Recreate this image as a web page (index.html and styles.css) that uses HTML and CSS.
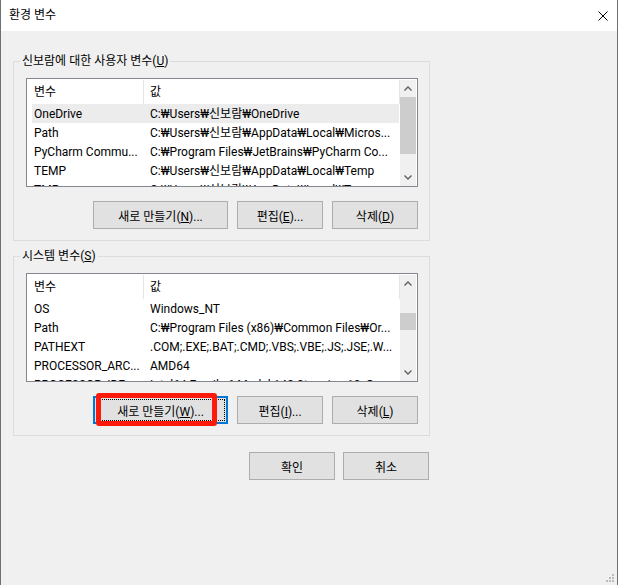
FILE: index.html
```html
<!DOCTYPE html>
<html lang="ko">
<head>
  <meta charset="UTF-8">
  <title>환경 변수</title>
  <link rel="stylesheet" href="styles.css">
</head>
<body>
  <div class="window">
    <div class="titlebar">
      <span class="title">환경 변수</span>
      <svg class="close" width="10" height="10" viewBox="0 0 10 10">
        <path d="M0.5 0.5L9.5 9.5M9.5 0.5L0.5 9.5" stroke="#000" stroke-width="1" fill="none"/>
      </svg>
    </div>

    <div class="content">
      <fieldset class="group">
        <legend>신보람에 대한 사용자 변수(<u>U</u>)</legend>
        <div class="listview">
          <div class="list">
            <div class="list-header"><span class="col-name">변수</span><span class="col-value">값</span></div>
            <div class="row selected"><span class="col-name">OneDrive</span><span class="col-value">C:₩Users₩신보람₩OneDrive</span></div>
            <div class="row"><span class="col-name">Path</span><span class="col-value">C:₩Users₩신보람₩AppData₩Local₩Micros...</span></div>
            <div class="row"><span class="col-name">PyCharm Commu...</span><span class="col-value">C:₩Program Files₩JetBrains₩PyCharm Co...</span></div>
            <div class="row"><span class="col-name">TEMP</span><span class="col-value">C:₩Users₩신보람₩AppData₩Local₩Temp</span></div>
            <div class="row"><span class="col-name">TMP</span><span class="col-value">C:₩Users₩신보람₩AppData₩Local₩Temp</span></div>
          </div>
          <div class="scrollbar">
            <div class="arrow"><svg width="8" height="5" viewBox="0 0 8 5"><path d="M0.5 4.5L4 1L7.5 4.5" stroke="#606060" stroke-width="1.4" fill="none"/></svg></div>
            <div class="track"><div class="thumb thumb-user"></div></div>
            <div class="arrow"><svg width="8" height="5" viewBox="0 0 8 5"><path d="M0.5 0.5L4 4L7.5 0.5" stroke="#606060" stroke-width="1.4" fill="none"/></svg></div>
          </div>
        </div>
        <div class="buttons">
          <button class="btn btn-wide">새로 만들기(<u>N</u>)...</button>
          <button class="btn">편집(<u>E</u>)...</button>
          <button class="btn">삭제(<u>D</u>)</button>
        </div>
      </fieldset>

      <fieldset class="group">
        <legend>시스템 변수(<u>S</u>)</legend>
        <div class="listview">
          <div class="list">
            <div class="list-header"><span class="col-name">변수</span><span class="col-value">값</span></div>
            <div class="row"><span class="col-name">OS</span><span class="col-value">Windows_NT</span></div>
            <div class="row"><span class="col-name">Path</span><span class="col-value">C:₩Program Files (x86)₩Common Files₩Or...</span></div>
            <div class="row"><span class="col-name">PATHEXT</span><span class="col-value">.COM;.EXE;.BAT;.CMD;.VBS;.VBE;.JS;.JSE;.W...</span></div>
            <div class="row"><span class="col-name">PROCESSOR_ARC...</span><span class="col-value">AMD64</span></div>
            <div class="row"><span class="col-name">PROCESSOR_IDE...</span><span class="col-value">Intel64 Family 6 Model 142 Stepping 10, Ge...</span></div>
          </div>
          <div class="scrollbar">
            <div class="arrow"><svg width="8" height="5" viewBox="0 0 8 5"><path d="M0.5 4.5L4 1L7.5 4.5" stroke="#606060" stroke-width="1.4" fill="none"/></svg></div>
            <div class="track"><div class="thumb thumb-system"></div></div>
            <div class="arrow"><svg width="8" height="5" viewBox="0 0 8 5"><path d="M0.5 0.5L4 4L7.5 0.5" stroke="#606060" stroke-width="1.4" fill="none"/></svg></div>
          </div>
        </div>
        <div class="buttons">
          <button class="btn btn-wide btn-default">새로 만들기(<u>W</u>)...<span class="annotation"></span></button>
          <button class="btn">편집(<u>I</u>)...</button>
          <button class="btn">삭제(<u>L</u>)</button>
        </div>
      </fieldset>

      <div class="dialog-buttons">
        <button class="btn">확인</button>
        <button class="btn">취소</button>
      </div>
    </div>

    <svg class="grip" width="8" height="8" viewBox="0 0 8 8">
      <rect x="6" y="0" width="2" height="2" fill="#bcbcbc"/>
      <rect x="3" y="3" width="2" height="2" fill="#bcbcbc"/>
      <rect x="6" y="3" width="2" height="2" fill="#bcbcbc"/>
      <rect x="0" y="6" width="2" height="2" fill="#bcbcbc"/>
      <rect x="3" y="6" width="2" height="2" fill="#bcbcbc"/>
      <rect x="6" y="6" width="2" height="2" fill="#bcbcbc"/>
    </svg>
  </div>
</body>
</html>
```

FILE: styles.css
```css
* {
  box-sizing: border-box;
}
body {
  margin: 0;
  font-family: Roboto, "Noto Sans CJK KR", sans-serif;
  font-size: 12px;
  color: #000;
  background-color: #f0f0f0;
}
.window {
  position: relative;
  width: 618px;
  height: 585px;
  border-left: 1px solid #707070;
  border-right: 1px solid #707070;
  background-color: #f0f0f0;
  overflow: hidden;
}
.titlebar {
  display: flex;
  align-items: center;
  justify-content: space-between;
  height: 31px;
  padding: 0 9px 0 8px;
  background-color: #fff;
}
.title {
  line-height: 31px;
}
.close {
  display: block;
}
.content {
  padding: 22px 12px 0;
}
.group {
  width: 417px;
  min-width: 0;
  margin: 0;
  padding: 8px 11px 11px 12px;
  border: 1px solid #dcdcdc;
}
.group + .group {
  margin-top: 7px;
}
.group legend {
  height: 17px;
  line-height: 17px;
  padding: 0 2px;
  margin-left: -6px;
}
.listview {
  display: flex;
  height: 109px;
  border: 1px solid #828790;
  background-color: #fff;
}
.list {
  flex: 1;
  overflow: hidden;
}
.list-header {
  display: flex;
  height: 25px;
}
.list-header span {
  height: 24px;
  margin-top: 1px;
  line-height: 24px;
  border-right: 1px solid #e5e5e5;
}
.list-header .col-name {
  width: 117px;
  padding-left: 7px;
}
.list-header .col-value {
  flex: 1;
  padding-left: 6px;
}
.row {
  display: flex;
  height: 19px;
  margin: 0 1px 0 5px;
  padding-top: 2px;
  line-height: 17px;
  white-space: nowrap;
}
.row.selected {
  background-color: #ececec;
}
.row .col-name {
  width: 112px;
  padding-left: 2px;
  overflow: hidden;
}
.row .col-value {
  flex: 1;
  padding-left: 6px;
  overflow: hidden;
}
.scrollbar {
  display: flex;
  flex-direction: column;
  width: 16px;
  margin: 1px 1px 0 0;
  background-color: #f0f0f0;
}
.arrow {
  display: flex;
  align-items: center;
  justify-content: center;
  height: 17px;
}
.arrow svg {
  display: block;
}
.track {
  flex: 1;
}
.thumb {
  background-color: #cdcdcd;
}
.thumb-user {
  height: 57px;
}
.thumb-system {
  height: 17px;
  margin-top: 21px;
}
.buttons {
  display: flex;
  justify-content: flex-end;
  gap: 9px;
  margin-top: 14px;
}
.btn {
  width: 86px;
  height: 28px;
  padding: 0;
  font: inherit;
  color: #000;
  background-color: #e1e1e1;
  border: 1px solid #adadad;
}
.btn-wide {
  width: 135px;
}
.btn-default {
  position: relative;
  border: 2px solid #0078d7;
}
.btn-default::after {
  content: "";
  position: absolute;
  inset: 1px;
  border: 1px dotted #000;
}
.annotation {
  position: absolute;
  left: 1px;
  top: -5px;
  width: 121px;
  height: 33px;
  border: 5px solid #fe1a0a;
  border-radius: 3px;
  z-index: 1;
}
.dialog-buttons {
  display: flex;
  justify-content: flex-end;
  gap: 8px;
  width: 416px;
  margin-top: 16px;
}
.grip {
  position: absolute;
  right: 3px;
  bottom: 3px;
}
```
